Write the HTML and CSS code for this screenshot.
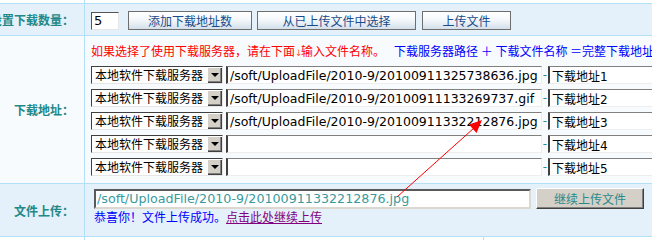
FILE: index.html
```html
<!DOCTYPE html>
<html lang="zh-CN">
<head>
    <meta charset="UTF-8">
    <title>下载地址设置</title>
    <link rel="stylesheet" href="styles.css">
</head>
<body>
    <table class="form-table">
        <colgroup>
            <col class="col-label">
            <col class="col-main">
            <col class="col-side">
        </colgroup>
        <tr class="row-top">
            <td></td>
            <td colspan="2"></td>
        </tr>
        <tr class="row-count">
            <td class="label">设置下载数量：</td>
            <td colspan="2" class="field">
                <div class="count-bar">
                    <input class="count-input" type="text" value="5">
                    <button class="btn btn-add">添加下载地址数</button>
                    <button class="btn btn-pick">从已上传文件中选择</button>
                    <button class="btn btn-upload">上传文件</button>
                </div>
            </td>
        </tr>
        <tr class="row-addr">
            <td class="label">下载地址：</td>
            <td colspan="2" class="field">
                <div class="addr-box">
                    <div class="hint">
                        <span class="hint-red">如果选择了使用下载服务器，请在下面<span class="arrow-down">↓</span>输入文件名称。</span><span class="hint-blue">下载服务器路径&nbsp;＋&nbsp;下载文件名称&nbsp;＝完整下载地址</span>
                    </div>
                    <div class="addr-list">
                        <div class="addr-row">
                            <div class="select-box"><select><option>本地软件下载服务器</option></select><span class="select-btn"></span></div>
                            <input class="path-input" type="text" value="/soft/UploadFile/2010-9/20100911325738636.jpg">
                            <span class="dash">-</span>
                            <input class="name-input" type="text" value="下载地址1">
                        </div>
                        <div class="addr-row">
                            <div class="select-box"><select><option>本地软件下载服务器</option></select><span class="select-btn"></span></div>
                            <input class="path-input" type="text" value="/soft/UploadFile/2010-9/20100911133269737.gif">
                            <span class="dash">-</span>
                            <input class="name-input" type="text" value="下载地址2">
                        </div>
                        <div class="addr-row">
                            <div class="select-box"><select><option>本地软件下载服务器</option></select><span class="select-btn"></span></div>
                            <input class="path-input" type="text" value="/soft/UploadFile/2010-9/20100911332212876.jpg">
                            <span class="dash">-</span>
                            <input class="name-input" type="text" value="下载地址3">
                        </div>
                        <div class="addr-row">
                            <div class="select-box"><select><option>本地软件下载服务器</option></select><span class="select-btn"></span></div>
                            <input class="path-input" type="text" value="">
                            <span class="dash">-</span>
                            <input class="name-input" type="text" value="下载地址4">
                        </div>
                        <div class="addr-row">
                            <div class="select-box"><select><option>本地软件下载服务器</option></select><span class="select-btn"></span></div>
                            <input class="path-input" type="text" value="">
                            <span class="dash">-</span>
                            <input class="name-input" type="text" value="下载地址5">
                        </div>
                    </div>
                </div>
            </td>
        </tr>
        <tr class="row-upload">
            <td class="label">文件上传：</td>
            <td colspan="2" class="field">
                <div class="upload-box">
                    <div class="upload-line">
                        <input class="upload-path" type="text" value="/soft/UploadFile/2010-9/20100911332212876.jpg">
                        <button class="btn-grey">继续上传文件</button>
                    </div>
                    <div class="upload-msg">
                        <span class="msg-ok">恭喜你！文件上传成功。</span><a class="msg-link" href="#">点击此处继续上传</a>
                    </div>
                </div>
            </td>
        </tr>
        <tr class="row-bottom">
            <td></td>
            <td></td>
            <td></td>
        </tr>
    </table>

    <!-- 标注箭头 -->
    <svg class="note-arrow" width="652" height="240" viewBox="0 0 652 240">
        <line x1="397" y1="197" x2="474" y2="128" stroke="#ff0000" stroke-width="1"/>
        <polygon points="482,120 469,124.5 476.5,133" fill="#ff0000"/>
    </svg>
</body>
</html>
```

FILE: styles.css
```css
html, body {
    margin: 0;
    padding: 0;
    background: #ffffff;
    overflow: hidden;
}

body {
    font-family: "DejaVu Sans", "Noto Sans CJK SC", sans-serif;
    font-size: 12px;
}

.form-table {
    table-layout: fixed;
    width: 760px;
    margin: -1px 0 0 -21px;
    border-collapse: separate;
    border-spacing: 1px;
    background: #b4e0f7;
}

.col-label {
    width: 104px;
}

.col-main {
    width: 398px;
}

.form-table td {
    padding: 0;
}

.row-top td {
    height: 3px;
    background: #ffffff;
}

.row-count td {
    height: 31px;
    background: #e4f1fa;
}

.row-addr td {
    height: 147px;
    background: #f8fbfe;
}

.row-upload td {
    height: 52px;
    background: #e4f1fa;
}

.row-bottom td {
    height: 10px;
    background: #ffffff;
}

.form-table td.label {
    padding-right: 10px;
    text-align: right;
    vertical-align: middle;
    white-space: nowrap;
    font-family: "Noto Sans CJK SC", sans-serif;
    font-weight: bold;
    color: #238888;
}

.field {
    vertical-align: top;
}

/* 下载数量 */
.count-bar {
    display: flex;
    align-items: center;
    gap: 5px;
    padding: 7px 0 0 6px;
}

.count-input {
    box-sizing: border-box;
    width: 28px;
    height: 18px;
    margin: 0 4px 0 0;
    padding: 0 2px;
    border: 1px solid;
    border-color: #555555 #e6e6e6 #e6e6e6 #555555;
    font-family: "DejaVu Sans", sans-serif;
    font-size: 13px;
    color: #000;
}

.btn {
    box-sizing: border-box;
    height: 19px;
    margin: 0;
    padding: 0;
    border: 1px solid #6e6e6e;
    background: linear-gradient(to bottom, #ffffff 0%, #f5f8fb 45%, #d3dfea 100%);
    color: #174b8b;
    font-family: "Noto Sans CJK SC", sans-serif;
    font-size: 12px;
    line-height: 17px;
}

.btn-add {
    width: 124px;
}

.btn-pick {
    width: 159px;
}

.btn-upload {
    width: 89px;
    margin-left: 1px;
}

/* 下载地址 */
.addr-box {
    padding: 6px 0 0 6px;
}

.hint {
    height: 18px;
    line-height: 18px;
    white-space: nowrap;
    font-family: "Noto Sans CJK SC", sans-serif;
}

.hint-red {
    color: #ff0000;
}

.arrow-down {
    display: inline-block;
    width: 6px;
    font-size: 9px;
    color: #ff5a1a;
    font-family: "DejaVu Sans", sans-serif;
}

.hint-blue {
    margin-left: 9px;
    color: #0000ff;
}

.addr-list {
    display: flex;
    flex-direction: column;
    gap: 5px;
    margin-top: 6px;
}

.addr-row {
    display: flex;
    align-items: center;
    height: 18px;
}

.select-box {
    box-sizing: border-box;
    display: flex;
    width: 132px;
    height: 18px;
    border: 1px solid;
    border-color: #404040 #e6e6e6 #e6e6e6 #404040;
    background: #ffffff;
}

.select-box select {
    flex: 1;
    min-width: 0;
    height: 16px;
    margin: 0;
    padding: 0 0 0 3px;
    border: none;
    outline: none;
    background: #ffffff;
    appearance: none;
    -webkit-appearance: none;
    font-family: "Noto Sans CJK SC", sans-serif;
    font-size: 12px;
    line-height: 16px;
    color: #000;
}

.select-btn {
    box-sizing: border-box;
    display: flex;
    align-items: center;
    justify-content: center;
    width: 15px;
    height: 16px;
    background: #d4d0c8;
    box-shadow: inset 1px 1px 0 #ffffff, inset -1px -1px 0 #404040, inset -2px -2px 0 #808080;
}

.select-btn::after {
    content: "";
    border-left: 4px solid transparent;
    border-right: 4px solid transparent;
    border-top: 4px solid #000000;
}

.path-input,
.name-input {
    box-sizing: border-box;
    height: 18px;
    margin: 0;
    padding: 0 0 0 2px;
    border-style: solid;
    border-width: 1px 1px 1px 2px;
    border-color: #808080 #eeeeee #eeeeee #404040;
    background: #ffffff;
    font-size: 12px;
    color: #000000;
}

.path-input {
    width: 316px;
    margin-left: 3px;
    font-family: "DejaVu Sans", sans-serif;
    font-size: 12.5px;
}

.name-input {
    width: 130px;
    font-family: "DejaVu Sans", "Noto Sans CJK SC", sans-serif;
}

.dash {
    width: 6px;
    text-align: center;
    color: #2e8e8e;
}

/* 文件上传 */
.upload-box {
    padding: 4px 0 0 9px;
}

.upload-line {
    display: flex;
    align-items: center;
    gap: 5px;
}

.upload-path {
    box-sizing: border-box;
    width: 437px;
    height: 20px;
    margin: 0;
    padding: 0 0 0 1px;
    border: 2px solid;
    border-color: #5a5a5a #dcd8d0 #dcd8d0 #5a5a5a;
    background: #ffffff;
    font-family: "DejaVu Sans", sans-serif;
    font-size: 12.7px;
    color: #3a9a9c;
}

.btn-grey {
    box-sizing: border-box;
    width: 108px;
    height: 21px;
    margin: 0;
    padding: 0;
    border: 1px solid;
    border-color: #ffffff #404040 #404040 #ffffff;
    box-shadow: inset -1px -1px 0 #808080;
    background: #d4d0c8;
    color: #2a8a8a;
    font-family: "Noto Sans CJK SC", sans-serif;
    font-size: 12px;
}

.upload-msg {
    margin-top: 1px;
    height: 14px;
    line-height: 14px;
    white-space: nowrap;
    font-family: "Noto Sans CJK SC", sans-serif;
}

.msg-ok {
    color: #0000ff;
}

.msg-link {
    color: #800080;
    text-decoration: underline;
}

.note-arrow {
    position: absolute;
    top: 0;
    left: 0;
    pointer-events: none;
}
```
